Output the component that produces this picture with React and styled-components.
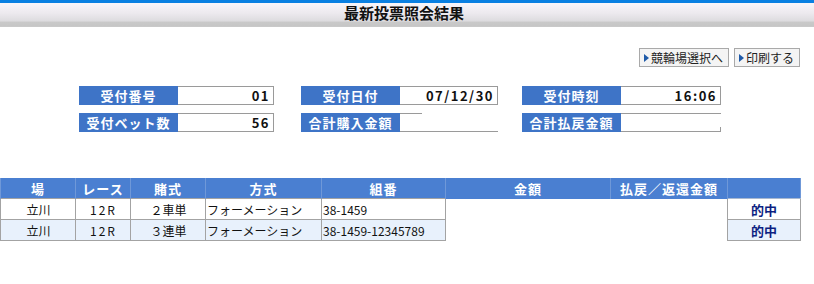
import styled, { createGlobalStyle } from 'styled-components';

const GlobalStyle = createGlobalStyle`
  body {
    margin: 0;
    background: #fff;
    font-family: "Noto Sans CJK JP", "Liberation Sans", sans-serif;
    font-size: 12px;
    color: #111;
  }
`;

const infoData = [
  [
    { label: '受付番号', value: '01' },
    { label: '受付日付', value: '07/12/30' },
    { label: '受付時刻', value: '16:06' },
  ],
  [
    { label: '受付ベット数', value: '56' },
    { label: '合計購入金額', value: '', variant: 'short' },
    { label: '合計払戻金額', value: '', variant: 'open' },
  ],
];

// space before each info box in a row
const boxGaps = [0, 27, 24];
const boxWidths = [195, 197, 199];

const columns = [
  { title: '場', width: 75 },
  { title: 'レース', width: 55 },
  { title: '賭式', width: 75 },
  { title: '方式', width: 116 },
  { title: '組番', width: 124 },
  { title: '金額', width: 165 },
  { title: '払戻／返還金額', width: 117 },
  { title: '', width: 73 },
];

const rows = [
  { place: '立川', race: '12R', kind: '２車単', method: 'フォーメーション', combo: '38-1459' },
  { place: '立川', race: '12R', kind: '３連単', method: 'フォーメーション', combo: '38-1459-12345789' },
];

const App = () => {
  return (
    <S.Page>
      <GlobalStyle />
      <S.Header>
        <S.Title>最新投票照会結果</S.Title>
      </S.Header>

      <S.Buttons>
        <S.Button><S.Arrow />競輪場選択へ</S.Button>
        <S.Button><S.Arrow />印刷する</S.Button>
      </S.Buttons>

      <S.Info>
        {infoData.map((line, i) => (
          <S.InfoRow key={i}>
            {line.map((item, j) => (
              <S.InfoItem key={item.label} $gap={boxGaps[j]} $width={boxWidths[j]}>
                <S.Label>{item.label}</S.Label>
                <S.Value $variant={item.variant}>{item.value}</S.Value>
              </S.InfoItem>
            ))}
          </S.InfoRow>
        ))}
      </S.Info>

      <S.Table>
        <colgroup>
          {columns.map((c, i) => <col key={i} style={{ width: c.width }} />)}
        </colgroup>
        <thead>
          <tr>
            {columns.map((c, i) => (
              <S.Th key={i} $last={i === columns.length - 1}>{c.title}</S.Th>
            ))}
          </tr>
        </thead>
        <tbody>
          {rows.map((r, i) => (
            <tr key={i}>
              <S.Td $alt={i % 2 === 1} $center>{r.place}</S.Td>
              <S.Td $alt={i % 2 === 1} $center $wide>{r.race}</S.Td>
              <S.Td $alt={i % 2 === 1} $center>{r.kind}</S.Td>
              <S.Td $alt={i % 2 === 1}>{r.method}</S.Td>
              <S.Td $alt={i % 2 === 1}>{r.combo}</S.Td>
              <S.Empty />
              <S.Empty />
              <S.Hit $alt={i % 2 === 1}>的中</S.Hit>
            </tr>
          ))}
        </tbody>
      </S.Table>
    </S.Page>
  );
};

const S = {
  Page: styled.div`
    width: 814px;
    height: 284px;
    overflow: hidden;
  `,
  Header: styled.div`
    height: 23px;
    border-top: 3px solid #0a80e2;
    border-bottom: 1px solid #c9c9c9;
    background: linear-gradient(#f9f6fa 0%, #ece9ee 45%, #dcdbde 80%, #c9c9c9 81%, #c6c6c6 100%);
    display: flex;
    justify-content: center;
    align-items: center;
  `,
  Title: styled.div`
    font-size: 15px;
    font-weight: bold;
    color: #111;
    margin-top: -4px;
    margin-left: -6px;
  `,
  Buttons: styled.div`
    display: flex;
    justify-content: flex-end;
    gap: 5px;
    padding-right: 14px;
    margin-top: 21px;
  `,
  Button: styled.div`
    display: flex;
    align-items: center;
    height: 17px;
    padding: 0 5px 0 4px;
    border: 1px solid #a9a9a9;
    background: #f4f4f4;
    font-size: 12px;
    color: #222;
  `,
  Arrow: styled.span`
    width: 0;
    height: 0;
    border-top: 4px solid transparent;
    border-bottom: 4px solid transparent;
    border-left: 5px solid #1f5aa8;
    margin-right: 2px;
  `,
  Info: styled.div`
    display: flex;
    flex-direction: column;
    gap: 8px;
    margin-top: 19px;
    padding-left: 79px;
  `,
  InfoRow: styled.div`
    display: flex;
  `,
  InfoItem: styled.div`
    display: flex;
    height: 19px;
    width: ${p => p.$width}px;
    margin-left: ${p => p.$gap}px;
  `,
  Label: styled.div`
    width: 99px;
    background: #3e74c7;
    color: #fff;
    font-weight: bold;
    font-size: 13px;
    letter-spacing: 1px;
    display: flex;
    align-items: center;
    justify-content: center;
  `,
  Value: styled.div`
    flex: 1;
    box-sizing: border-box;
    background: #fff;
    border: 1px solid #9a9a9a;
    border-left: none;
    font-weight: bold;
    font-size: 13px;
    letter-spacing: 1.5px;
    display: flex;
    align-items: center;
    justify-content: flex-end;
    padding-right: 3px;
    ${p => p.$variant === 'short' && `
      border-top: none;
      border-right: none;
      background: linear-gradient(#9a9a9a, #9a9a9a) top left / 22px 1px no-repeat, #fff;
    `}
    ${p => p.$variant === 'open' && `
      border-right: none;
      background: linear-gradient(#9a9a9a, #9a9a9a) bottom right / 1px 4px no-repeat, #fff;
    `}
  `,
  Table: styled.table`
    margin-top: 46px;
    border-collapse: collapse;
    table-layout: fixed;
    width: 800px;
  `,
  Th: styled.th`
    height: 20px;
    padding: 0;
    background: #4a7fd1;
    color: #fff;
    font-weight: bold;
    font-size: 13px;
    letter-spacing: 1px;
    border: 1px solid #6f98d8;
    border-top: none;
    border-bottom: ${p => (p.$last ? '1px solid #a8b8d0' : 'none')};
  `,
  Td: styled.td`
    height: 20px;
    padding: 0 0 0 1px;
    font-size: 12px;
    white-space: nowrap;
    letter-spacing: ${p => (p.$wide ? '2px' : '0')};
    background: ${p => (p.$alt ? '#e8f1fc' : '#fff')};
    border: 1px solid #a3a3a3;
    text-align: ${p => (p.$center ? 'center' : 'left')};
  `,
  Empty: styled.td`
    background: #fff;
    border: none;
    padding: 0;
  `,
  Hit: styled.td`
    height: 20px;
    padding: 0;
    text-align: center;
    font-weight: bold;
    font-size: 13px;
    color: #0c1f82;
    background: ${p => (p.$alt ? '#e8f1fc' : '#fff')};
    border: 1px solid #a3a3a3;
  `,
};

export default App;
